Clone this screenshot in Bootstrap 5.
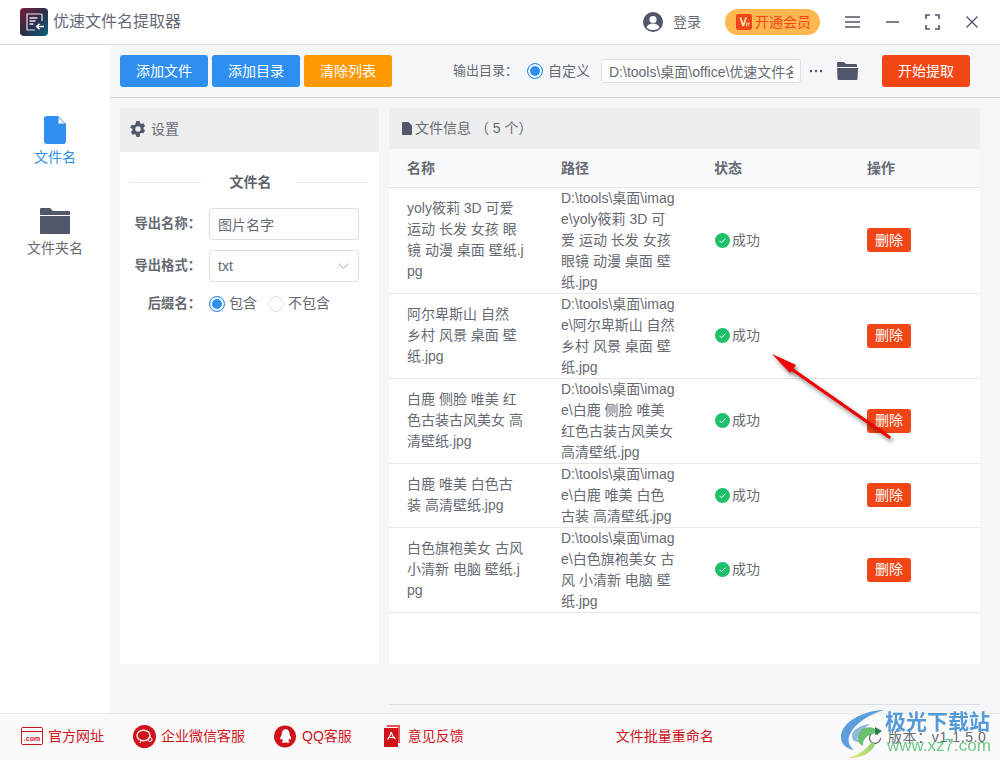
<!DOCTYPE html>
<html lang="zh-CN">
<head>
    <meta charset="UTF-8">
    <meta name="viewport" content="width=device-width, initial-scale=1.0">
    <title>优速文件名提取器</title>
    <link href="https://cdn.jsdelivr.net/npm/bootstrap@5.3.0/dist/css/bootstrap.min.css" rel="stylesheet">
    <style>
        html, body { height: 760px; overflow: hidden; }
        body { font-family: "Liberation Sans", "Noto Sans CJK SC", sans-serif; font-size: 14px; color: #666a73; background: #f5f6f8; position: relative; }
        .top-bar { height: 45px; background: #fff; border-bottom: 1px solid #dcdde0; padding-left: 20px; }
        .app-title { font-size: 16px; margin-left: 5px; color: #666a78; }
        .login-text { font-size: 14px; margin-left: 10px; margin-right: 24px; }
        .vip-pill { width: 95px; height: 26px; background: #ffb84f; border-radius: 13px; color: #f24516; font-size: 14px; padding-left: 11px; margin-right: 25px; gap: 3px; }
        .win-btn { display: block; }
        .mid-wrap { height: 668px; }
        .side-bar { width: 110px; background: #fff; padding-top: 71px; }
        .side-item { height: 92px; font-size: 14px; }
        .side-item svg { display: block; }
        .side-on { color: #2f8ff0; }
        .tool-bar { height: 53px; border-bottom: 1px solid #cfd0d3; padding: 0 30px 0 10px; gap: 4px; }
        .act-btn { width: 88px; height: 32px; padding: 0; font-size: 14px; color: #fff; border: 0; border-radius: 3px; }
        .act-blue, .act-blue:hover { background: #2f8ff0; color: #fff; }
        .act-orange, .act-orange:hover { background: #ff9900; color: #fff; }
        .act-red, .act-red:hover { background: #f24516; color: #fff; }
        .out-label { font-size: 13px; margin-right: 5px; }
        .form-check-input.tiny-radio { width: 16px; height: 16px; margin: 0; float: none; border: 1px solid #dcdfe6; background-image: none; flex-shrink: 0; }
        .form-check-input.tiny-radio:checked { background: #2f8ff0; border-color: #2f8ff0; box-shadow: inset 0 0 0 2px #fff; background-image: none; }
        .path-input { width: 200px; height: 24px; min-height: 24px; padding: 0 7px; font-size: 14px; color: #666a73; border: 1px solid #dcdfe6; border-radius: 3px; margin-left: 7px; }
        .pane-row { padding: 10px 20px 0 10px; gap: 10px; height: 566px; }
        .left-pane { width: 259px; background: #fff; }
        .left-head { height: 44px; background: #eeeeee; padding-left: 10px; padding-bottom: 2px; gap: 5px; }
        .name-divider { margin: 20px 11px 16px 9px; height: 20px; font-weight: 700; color: #5f636f; }
        .name-divider i { flex: 1; height: 1px; background: #e8e9eb; }
        .name-divider span { width: 95px; padding-left: 4px; text-align: center; }
        .form-line { margin-bottom: 10px; }
        .form-line label { width: 81px; text-align: right; font-size: 13.3px; font-weight: 700; margin-right: 8px; white-space: nowrap; color: #666a73; }
        .radio-line { padding-top: 1px; }
        .form-control.field-box, .form-select.field-box { width: 150px; height: 32px; min-height: 32px; font-size: 14px; color: #666a73; padding: 0 8px; border: 1px solid #dcdfe6; border-radius: 4px; }
        .form-select.field-box { background-image: url("data:image/svg+xml,%3csvg xmlns='http://www.w3.org/2000/svg' viewBox='0 0 12 8'%3e%3cpath fill='none' stroke='%23909399' d='M1 1.500l5 5 5-5'/%3e%3c/svg%3e"); background-position: right 9px center; background-size: 11px 8px; }
        .right-pane { width: 591px; background: #fff; }
        .right-head { height: 41px; background: #eeeeee; padding-left: 13px; gap: 3px; }
        .file-grid { table-layout: fixed; width: 591px; margin: 0; color: #666a73; font-size: 14px; line-height: 21px; }
        .file-grid th { height: 38px; padding: 2px 0 0 18px; background: #f8f9fa; color: #666a73; font-weight: 700; vertical-align: middle; border-bottom: 1px solid #e6e7e9; }
        .file-grid td { padding: 0 18px; vertical-align: middle; word-break: break-all; border-bottom: 1px solid #e6e7e9; background: #fff; color: #666a73; }
        .ok-mark { gap: 2px; margin-left: 1px; }
        .del-btn { width: 44px; height: 24px; padding: 0; font-size: 14px; border: 0; border-radius: 3px; display: block; }
        .pane-line { height: 1px; background: #dcdde0; margin: 40px 20px 0 279px; }
        .foot-bar { height: 47px; background: #fafafa; border-top: 1px solid #e9eaec; color: #d0121b; padding-left: 21px; padding-bottom: 2px; font-size: 14px; }
        .foot-link { white-space: nowrap; }
        .ver-text { color: #666a73; font-size: 14px; position: absolute; left: 868px; top: 727px; gap: 6px; letter-spacing: .6px; white-space: nowrap; }
        .red-arrow { position: absolute; left: 760px; top: 345px; pointer-events: none; }
        .wm-logo { position: absolute; left: 840px; top: 709px; pointer-events: none; }
        .wm-name { position: absolute; left: 885px; top: 706px; font-size: 21px; font-weight: 700; color: #4b95d8; opacity: .95; white-space: nowrap; line-height: 32px; }
        .wm-url { position: absolute; left: 887px; top: 736px; font-size: 17px; color: #62c47c; white-space: nowrap; line-height: 20px; opacity: .9; }
    </style>
</head>
<body>
    <div class="top-bar d-flex align-items-center">
        <svg width="28" height="28" viewBox="0 0 28 28">
            <defs><linearGradient id="logoGrad" x1="0" y1="0" x2="1" y2="1"><stop offset="0" stop-color="#7a1c3a"/><stop offset=".5" stop-color="#2e2c48"/><stop offset="1" stop-color="#0c6480"/></linearGradient></defs>
            <rect width="28" height="28" rx="4" fill="url(#logoGrad)"/>
            <path d="M22 6H7v16h8M22 6v7" fill="none" stroke="#e8e8ee" stroke-width="1.2"/>
            <path d="M9.500 10h8M9.500 13h6M9.500 16h4" stroke="#e8e8ee" stroke-width="1.500"/>
            <path d="M24 18.500h-7.500M19.500 15.800l-2.800 2.700 2.800 2.700" fill="none" stroke="#fff" stroke-width="1.500"/>
        </svg>
        <span class="app-title">优速文件名提取器</span>
        <svg class="ms-auto" width="20" height="20" viewBox="0 0 20 20"><circle cx="10" cy="10" r="10" fill="#51566b"/><circle cx="10" cy="7.500" r="3.600" fill="#fff"/><path d="M3.500 15.800c1-3.200 3.500-4.200 6.500-4.200s5.500 1 6.500 4.200A9 9 0 0 1 10 18a9 9 0 0 1-6.500-2.200z" fill="#fff"/></svg>
        <span class="login-text">登录</span>
        <div class="vip-pill d-flex align-items-center">
            <svg width="16" height="16" viewBox="0 0 17 17"><rect width="17" height="17" rx="2.500" fill="#f24516"/><path d="M3.500 3.500l3.200 9.500h2L11.800 3.500H9.600L7.800 9.500 5.800 3.500z" fill="#ffd9a0"/><path d="M10.500 13V9h1v4zM12.300 13V9h2v2.200h-1V13z" fill="#ffd9a0"/></svg>
            <span>开通会员</span>
        </div>
        <svg class="win-btn" width="15" height="12" viewBox="0 0 15 12"><path d="M0 1h15M0 6h15M0 11h15" stroke="#51566b" stroke-width="1.500"/></svg>
        <svg class="win-btn" style="margin-left:26px" width="13" height="12" viewBox="0 0 13 12"><path d="M0 6h13" stroke="#51566b" stroke-width="1.500"/></svg>
        <svg class="win-btn" style="margin-left:26px" width="15" height="16" viewBox="0 0 15 16"><path d="M1 5V1h4M10 1h4v4M14 11v4h-4M5 15H1v-4" fill="none" stroke="#51566b" stroke-width="1.600"/></svg>
        <svg class="win-btn" style="margin-left:26px;margin-right:22px" width="12" height="12" viewBox="0 0 12 12"><path d="M.5.500l11 11M11.500.500l-11 11" stroke="#51566b" stroke-width="1.400"/></svg>
    </div>

    <div class="mid-wrap d-flex">
        <div class="side-bar d-flex flex-column align-items-center">
            <div class="side-item side-on d-flex flex-column align-items-center">
                <svg width="22" height="28" viewBox="0 0 22 28" style="margin-bottom:3px"><path d="M3 0h11l8 8v17a3 3 0 0 1-3 3H3a3 3 0 0 1-3-3V3a3 3 0 0 1 3-3z" fill="#2f8ff0"/><path d="M14.500 1.500l6 6h-6z" fill="#fff"/></svg>
                文件名
            </div>
            <div class="side-item d-flex flex-column align-items-center">
                <svg width="30" height="26" viewBox="0 0 30 26" style="margin-bottom:4px"><path d="M1 0h9l3 3h16a1 1 0 0 1 1 1v3H0V1a1 1 0 0 1 1-1z" fill="#51566b"/><path d="M0 8h30v17a1 1 0 0 1-1 1H1a1 1 0 0 1-1-1z" fill="#51566b"/></svg>
                文件夹名
            </div>
        </div>

        <div class="flex-grow-1">
            <div class="tool-bar d-flex align-items-center">
                <button class="btn act-btn act-blue">添加文件</button>
                <button class="btn act-btn act-blue">添加目录</button>
                <button class="btn act-btn act-orange">清除列表</button>
                <span class="out-label ms-auto">输出目录：</span>
                <input class="form-check-input tiny-radio" type="radio" checked>
                <span style="margin-left:1px">自定义</span>
                <input class="form-control path-input" type="text" value="D:\tools\桌面\office\优速文件名提取器">
                <svg style="margin-left:4px" width="14" height="4" viewBox="0 0 14 4"><circle cx="2" cy="2" r="1.200" fill="#51566b"/><circle cx="7" cy="2" r="1.200" fill="#51566b"/><circle cx="12" cy="2" r="1.200" fill="#51566b"/></svg>
                <svg style="margin-left:10px" width="21" height="18" viewBox="0 0 21 18"><path d="M1 0h6l2 2h10a1 1 0 0 1 1 1v2H0V1a1 1 0 0 1 1-1z" fill="#51566b"/><path d="M0 6h21l-.500 11a1 1 0 0 1-1 1h-18a1 1 0 0 1-1-1z" fill="#51566b"/></svg>
                <button class="btn act-btn act-red" style="margin-left:20px">开始提取</button>
            </div>

            <div class="pane-row d-flex">
                <div class="left-pane">
                    <div class="left-head d-flex align-items-center">
                        <svg width="16" height="16" viewBox="1 1 14 14"><path fill="#51566b" d="M9.400 1l.4 1.900c.4.200.8.400 1.200.7l1.800-.6 1.400 2.400-1.400 1.300a5 5 0 0 1 0 1.400l1.400 1.300-1.400 2.400-1.800-.6c-.4.300-.8.500-1.200.7L9.400 15H6.600l-.4-1.900a5 5 0 0 1-1.200-.7l-1.800.6-1.400-2.400 1.400-1.300a5 5 0 0 1 0-1.400L1.200 6.600l1.400-2.400 1.800.6c.4-.3.800-.5 1.200-.7L6.600 1zM8 5.600a2.400 2.400 0 1 0 0 4.800 2.400 2.400 0 0 0 0-4.800z"/></svg>
                        <span>设置</span>
                    </div>
                    <div class="name-divider d-flex align-items-center"><i></i><span>文件名</span><i></i></div>
                    <div class="form-line d-flex align-items-center">
                        <label>导出名称：</label>
                        <input class="form-control field-box" type="text" value="图片名字">
                    </div>
                    <div class="form-line d-flex align-items-center">
                        <label>导出格式：</label>
                        <select class="form-select field-box"><option>txt</option></select>
                    </div>
                    <div class="form-line radio-line d-flex align-items-center">
                        <label>后缀名：</label>
                        <input class="form-check-input tiny-radio" type="radio" name="suffix" checked>
                        <span class="ms-1">包含</span>
                        <input class="form-check-input tiny-radio" style="margin-left:11px" type="radio" name="suffix">
                        <span class="ms-1">不包含</span>
                    </div>
                </div>

                <div class="right-pane">
                    <div class="right-head d-flex align-items-center">
                        <svg width="10" height="13" viewBox="0 0 10 13"><path d="M1 0h5.500L10 3.500V12a1 1 0 0 1-1 1H1a1 1 0 0 1-1-1V1a1 1 0 0 1 1-1z" fill="#51566b"/></svg>
                        <span>文件信息 （ 5 个）</span>
                    </div>
                    <table class="table file-grid">
                        <colgroup><col style="width:154px"><col style="width:153px"><col style="width:153px"><col style="width:131px"></colgroup>
                        <thead><tr><th>名称</th><th>路径</th><th>状态</th><th>操作</th></tr></thead>
                        <tbody id="fileRows"></tbody>
                    </table>
                </div>
            </div>
            <div class="pane-line"></div>
        </div>
    </div>

    <div class="foot-bar d-flex align-items-center">
        <svg width="22" height="18" viewBox="0 0 22 18"><rect x=".5" y=".5" width="21" height="17" rx="1" fill="none" stroke="#d0121b"/><path d="M1 4.500h20" stroke="#d0121b"/><text x="11" y="14" text-anchor="middle" font-family="Liberation Sans, sans-serif" font-size="7" font-weight="700" fill="#d0121b">.com</text></svg>
        <span class="foot-link" style="margin-left:5px">官方网址</span>
        <svg style="margin-left:29px" width="23" height="23" viewBox="0 0 23 23"><circle cx="11.500" cy="11.500" r="11.500" fill="#d0121b"/><ellipse cx="10.500" cy="10.500" rx="6.500" ry="5.200" fill="none" stroke="#fff" stroke-width="1.400"/><circle cx="17" cy="14.500" r="2" fill="none" stroke="#fff"/><path d="M8 15l-1 3" stroke="#fff"/></svg>
        <span class="foot-link" style="margin-left:5px">企业微信客服</span>
        <svg style="margin-left:29px" width="22" height="23" viewBox="0 0 22 23"><circle cx="11" cy="11.500" r="11" fill="#d0121b"/><path d="M11 4c3 0 4.600 2.300 4.600 5 0 1 .4 1.500 1 2.600.6 1.100.8 2.600.2 3-.4.200-.9-.3-1.300-1-.2 1-.7 1.800-1.300 2.400.9.300 1.500.8 1.300 1.200-.3.600-2 .6-3.300.3h-1c-1.300.3-3 .3-3.300-.3-.2-.4.400-.9 1.300-1.200-.6-.6-1.100-1.400-1.300-2.400-.4.700-.9 1.200-1.300 1-.6-.4-.4-1.900.2-3 .6-1.100 1-1.600 1-2.600 0-2.700 1.600-5 4.600-5z" fill="#fff"/></svg>
        <span class="foot-link" style="margin-left:6px">QQ客服</span>
        <svg style="margin-left:32px" width="16" height="22" viewBox="0 0 16 22"><path d="M3 0h13v18h-2V2H3z" fill="#e8505a"/><path d="M0 3h14v19H0z" fill="#d0121b"/><path d="M7 7c.8 2.500 1.800 5 4.500 7M7 7c-.3 3-1.300 5.500-3.500 7.500M4 12.500h7" fill="none" stroke="#fff" stroke-width="1.200"/></svg>
        <span class="foot-link" style="margin-left:8px">意见反馈</span>
        <span class="foot-link" style="margin-left:152px">文件批量重命名</span>
    </div>

    <div class="ver-text d-flex align-items-center">
        <svg width="14" height="14" viewBox="0 0 14 14"><path d="M12.500 7A5.500 5.500 0 1 1 9.500 2" fill="none" stroke="#606266" stroke-width="1.100"/><path d="M8 .5l3 1.700-2 2.300z" fill="#606266"/></svg>
        <span>版本：v1.1.5.0</span>
    </div>

    <svg class="red-arrow" width="140" height="105" viewBox="0 0 140 105" style="filter:drop-shadow(2px 3px 2px rgba(0,0,0,.5))">
        <path d="M129 92L30 23" stroke="#f00000" stroke-width="3.200" stroke-linecap="round"/>
        <path d="M12 9L36 20 30 28z" fill="#f00000"/>
    </svg>

    <svg class="wm-logo" width="52" height="52" viewBox="0 0 52 52">
        <defs><linearGradient id="tailGrad" x1="1" y1="0" x2="0" y2="1"><stop offset="0" stop-color="#7fd06a"/><stop offset="1" stop-color="#f2ea8a"/></linearGradient></defs>
        <path d="M44 1C28 1 4 10 1 26c-1 8 5 14 13 15-5-4-7-10-4-16C15 14 30 5 44 1z" fill="#5c9fdc"/>
        <path d="M30 15C20 16 12 21 12 27c0 4 3 6 7 6-2-2-2-5 0-8 3-4 7-7 11-10z" fill="#8fb9e2"/>
        <path d="M41 24C32 15 20 17 18 27c-1 4 1 8 5 10-1-6 4-14 18-13z" fill="#69c06e"/>
        <path d="M35 18l7 4-7 4z" fill="#2f7d4c"/>
        <path d="M32 32c-4 8-14 14-24 17 10 1 22-3 27-13z" fill="url(#tailGrad)"/>
    </svg>
    <div class="wm-name">极光下载站</div>
    <div class="wm-url">www.xz7.com</div>

    <script>
        // table rows
        const files = [
            ["yoly筱莉 3D 可爱 运动 长发 女孩 眼镜 动漫 桌面 壁纸.jpg", "D:\\tools\\桌面\\image\\yoly筱莉 3D 可爱 运动 长发 女孩 眼镜 动漫 桌面 壁纸.jpg"],
            ["阿尔卑斯山 自然 乡村 风景 桌面 壁纸.jpg", "D:\\tools\\桌面\\image\\阿尔卑斯山 自然 乡村 风景 桌面 壁纸.jpg"],
            ["白鹿 侧脸 唯美 红色古装古风美女 高清壁纸.jpg", "D:\\tools\\桌面\\image\\白鹿 侧脸 唯美 红色古装古风美女 高清壁纸.jpg"],
            ["白鹿 唯美 白色古装 高清壁纸.jpg", "D:\\tools\\桌面\\image\\白鹿 唯美 白色古装 高清壁纸.jpg"],
            ["白色旗袍美女 古风 小清新 电脑 壁纸.jpg", "D:\\tools\\桌面\\image\\白色旗袍美女 古风 小清新 电脑 壁纸.jpg"]
        ];
        const okIcon = '<svg width="15" height="15" viewBox="0 0 15 15"><circle cx="7.5" cy="7.5" r="7.500" fill="#1fbf6c"/><path d="M4.500 7.800l2 2 4-4.200" fill="none" stroke="#fff" stroke-width="1"/></svg>';
        document.getElementById("fileRows").innerHTML = files.map(f => `
            <tr>
                <td>${f[0]}</td>
                <td>${f[1]}</td>
                <td><span class="ok-mark d-flex align-items-center">${okIcon}成功</span></td>
                <td><button class="btn del-btn act-red">删除</button></td>
            </tr>`).join("");
    </script>
    <script src="https://cdn.jsdelivr.net/npm/bootstrap@5.3.0/dist/js/bootstrap.bundle.min.js"></script>
</body>
</html>
